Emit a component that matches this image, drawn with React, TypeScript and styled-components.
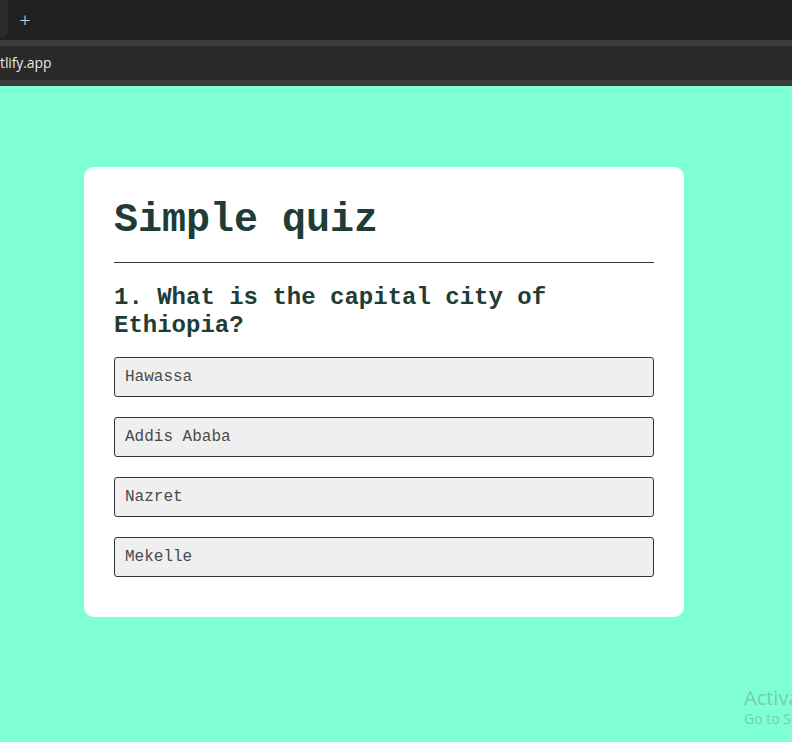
import styled, { createGlobalStyle } from "styled-components";

const GlobalStyle = createGlobalStyle`
  html, body {
    margin: 0;
    padding: 0;
    height: 100%;
    overflow: hidden;
  }
  #root {
    height: 100%;
  }
`;

const options = ["Hawassa", "Addis Ababa", "Nazret", "Mekelle"];

const App = () => {
  return (
    <Window>
      <GlobalStyle />
      <TabBar>
        <TabEdge />
        <NewTab>+</NewTab>
      </TabBar>
      <ToolbarStripe />
      <AddressBar>tlify.app</AddressBar>
      <ToolbarStripe />
      <Page>
        <Card>
          <Title>Simple quiz</Title>
          <Divider />
          <Question>1. What is the capital city of Ethiopia?</Question>
          <Options>
            {options.map((option) => (
              <Option key={option}>{option}</Option>
            ))}
          </Options>
        </Card>
        <Watermark>
          <WatermarkTitle>Activate Windows</WatermarkTitle>
          <WatermarkText>Go to Settings to activate Windows.</WatermarkText>
        </Watermark>
      </Page>
    </Window>
  );
};

const Window = styled.div`
  display: flex;
  flex-direction: column;
  height: 100%;
  background-color: #202020;
`;

const TabBar = styled.div`
  height: 40px;
  display: flex;
  align-items: stretch;
  background-color: #202020;
`;

const TabEdge = styled.div`
  width: 8px;
  background-color: #2b2b2b;
  border-radius: 0 0 8px 0;
  margin-bottom: 2px;
`;

const NewTab = styled.div`
  width: 34px;
  display: flex;
  align-items: center;
  justify-content: center;
  color: #d0d0d0;
  font-family: "Noto Sans", sans-serif;
  font-size: 20px;
  font-weight: 300;
  padding-bottom: 1px;
`;

const ToolbarStripe = styled.div`
  height: 6px;
  background-color: #3b3b3b;
`;

const AddressBar = styled.div`
  height: 34px;
  display: flex;
  align-items: center;
  padding-bottom: 1px;
  box-sizing: border-box;
  background-color: #292929;
  color: #e6e6e6;
  font-family: "Open Sans", "Noto Sans", sans-serif;
  font-size: 14px;
  letter-spacing: -0.1px;
`;

const Page = styled.div`
  position: relative;
  flex: 1;
  background-color: aquamarine;
  padding: 81px 0 0 84px;
  overflow: hidden;
`;

const Card = styled.div`
  width: 600px;
  box-sizing: border-box;
  padding: 31px 30px 40px;
  background-color: #ffffff;
  border-radius: 10px;
  color: #1f3d36;
  font-family: "Liberation Mono", "Courier New", monospace;
`;

const Title = styled.h1`
  margin: 0;
  font-size: 40px;
  line-height: 45px;
  font-weight: bold;
`;

const Divider = styled.hr`
  margin: 19px 0 21px;
  border: none;
  border-top: 1px solid #333333;
`;

const Question = styled.h2`
  margin: 0 0 17px;
  font-size: 24px;
  line-height: 28px;
  font-weight: bold;
`;

const Options = styled.div`
  display: flex;
  flex-direction: column;
  gap: 20px;
`;

const Option = styled.button`
  height: 40px;
  padding: 0 10px;
  text-align: left;
  background-color: #efefef;
  border: 1px solid #333333;
  border-radius: 3px;
  color: #4a4a4a;
  font-family: "Liberation Mono", "Courier New", monospace;
  font-size: 16px;
`;

const Watermark = styled.div`
  position: absolute;
  left: 744px;
  top: 600px;
  white-space: nowrap;
  color: rgba(90, 110, 100, 0.35);
  font-family: "Open Sans", "Noto Sans", sans-serif;
`;

const WatermarkTitle = styled.div`
  font-size: 20px;
  line-height: 24px;
`;

const WatermarkText = styled.div`
  font-size: 14px;
  line-height: 18px;
`;

export default App;
